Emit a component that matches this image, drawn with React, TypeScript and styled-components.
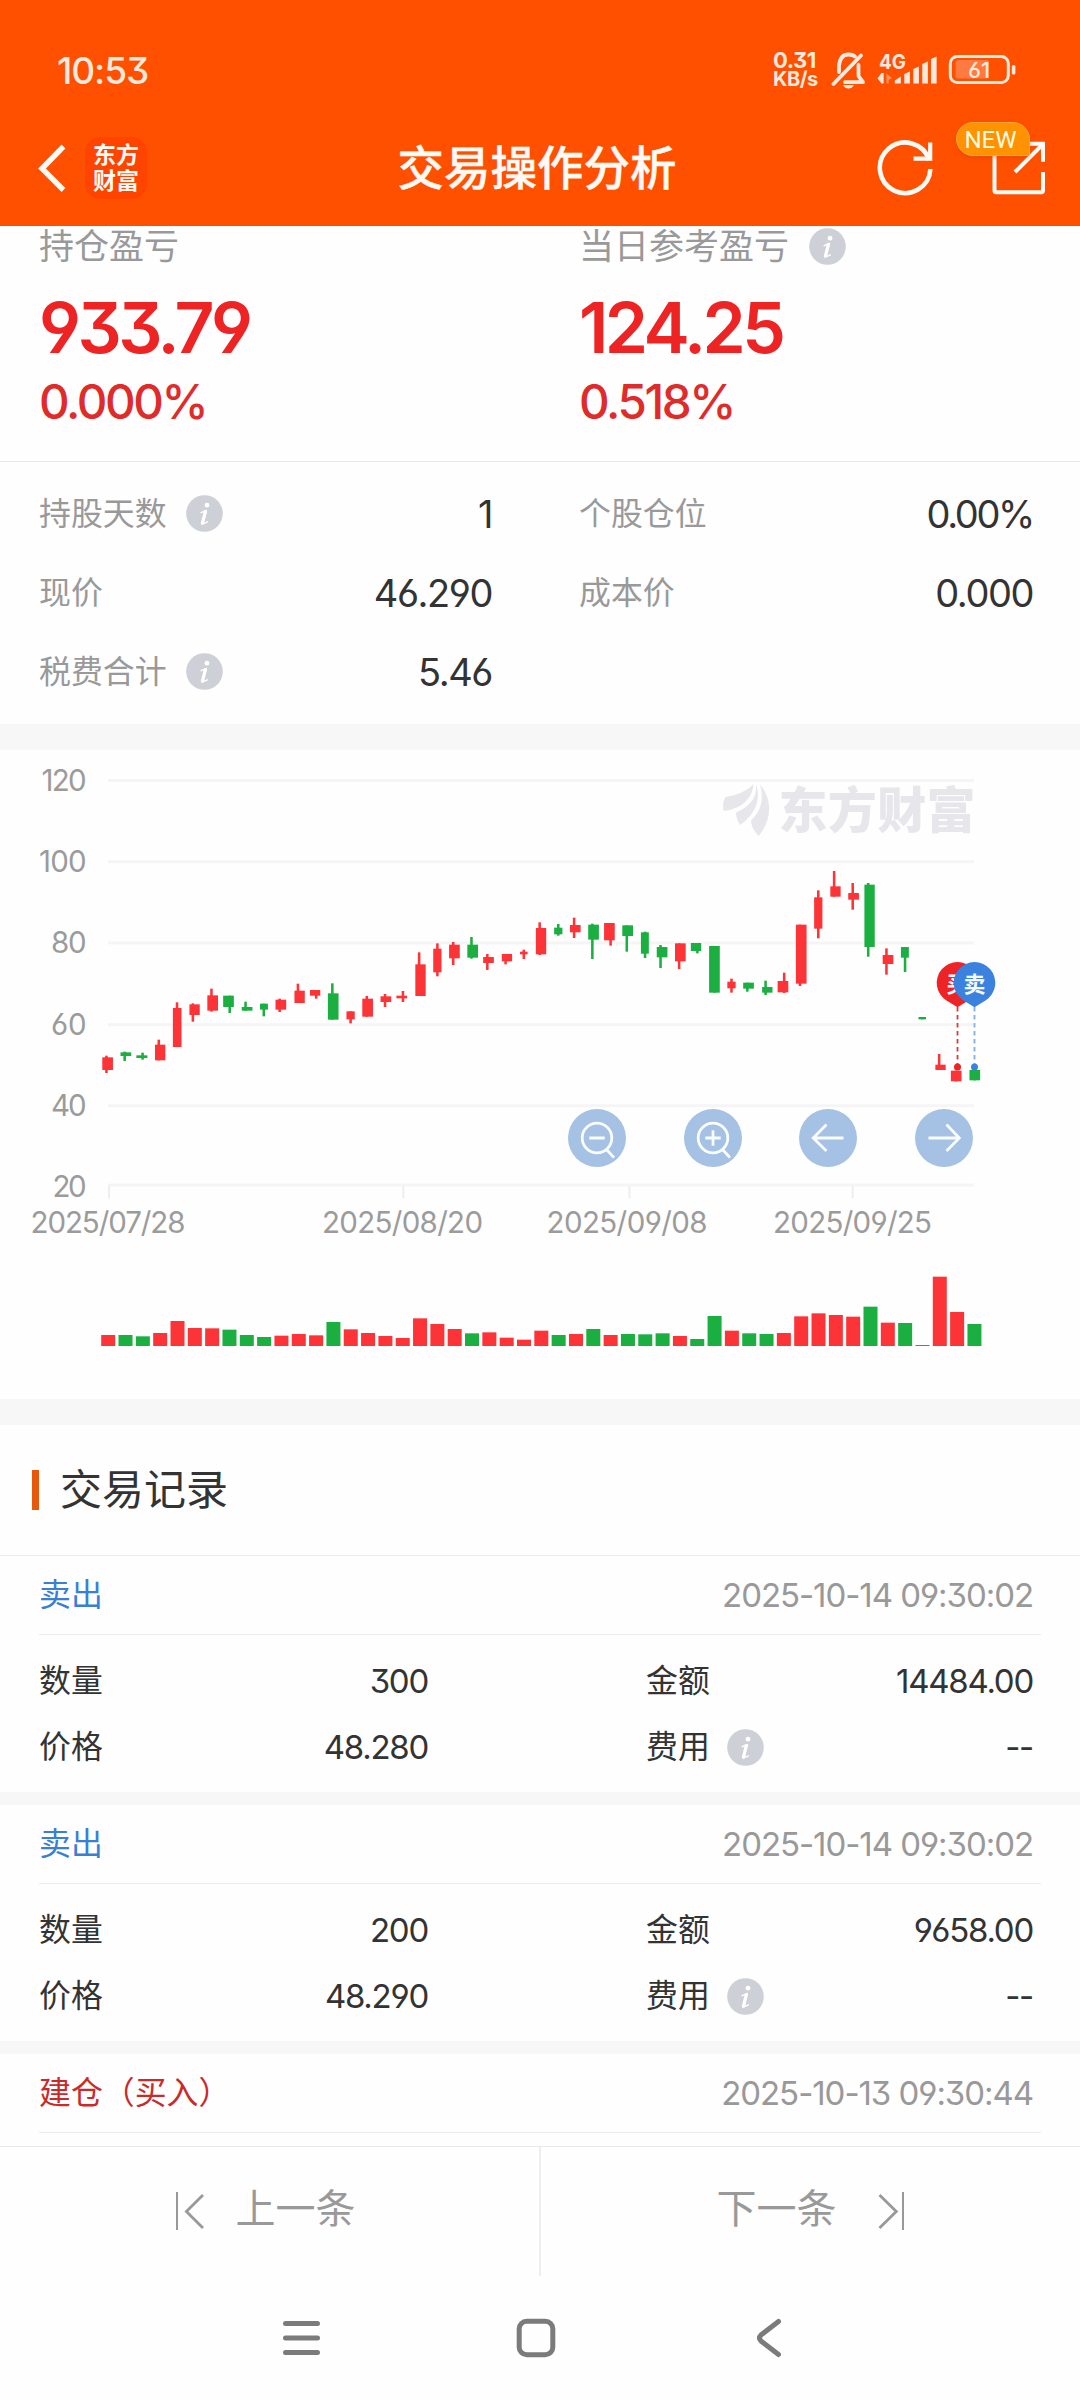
import React from 'react';
import styled, { createGlobalStyle } from 'styled-components';

const RED = '#fc3438';
const GREEN = '#1bae40';

const GlobalStyle = createGlobalStyle`
  * { box-sizing: border-box; }
  body {
    margin: 0;
    background: #fefefe;
    font-family: Inter, "Noto Sans CJK SC", sans-serif;
    font-feature-settings: "cv03", "cv04", "cv09";
    color: #333;
  }
  svg { display: block; flex: none; }
`;

const Page = styled.div`
  width: 1080px;
  height: 2400px;
  display: flex;
  flex-direction: column;
  overflow: hidden;
  background: #fefefe;
`;

/* ---------- header ---------- */

const Header = styled.header`
  height: 226px;
  flex: none;
  background: #ff5000;
  color: #fffaf5;
`;

const StatusBar = styled.div`
  height: 110px;
  padding: 30px 63px 0 57px;
  display: flex;
  align-items: center;
  color: #ffe9dd;
`;

const Clock = styled.span`
  flex: 1;
  font-size: 37px;
  font-weight: 500;
  letter-spacing: -0.03em;
`;

const NetSpeed = styled.div`
  width: 58px;
  display: flex;
  flex-direction: column;
  font-weight: 700;
  line-height: 19px;
  letter-spacing: -0.03em;
`;

const SpeedLine = styled.span<{ $size: number }>`
  font-size: ${(p) => p.$size}px;
`;

const TitleBar = styled.div`
  height: 116px;
  padding: 0 34px 0 38px;
  display: grid;
  grid-template-columns: 1fr auto 1fr;
  align-items: center;
`;

const TitleLeft = styled.div`
  display: flex;
  align-items: center;
  gap: 17px;
`;

const TitleRight = styled.div`
  display: flex;
  justify-content: flex-end;
  align-items: center;
  gap: 59px;
`;

const Title = styled.h1`
  margin: 0 10px 0 0;
  font-size: 46.5px;
  line-height: 60px;
  font-weight: 500;
  -webkit-text-stroke: 0.4px #fffaf5;
`;

const BrandTile = styled.div`
  width: 62px;
  height: 62px;
  border-radius: 15px;
  background: #ff4400;
  display: flex;
  flex-direction: column;
  align-items: center;
  justify-content: center;
  font-size: 23px;
  line-height: 26.5px;
  font-weight: 700;
`;

const ShareButton = styled.div`
  position: relative;
  width: 54px;
  height: 56px;
`;

const NewBadge = styled.span`
  position: absolute;
  left: -36px;
  top: -18px;
  width: 74px;
  height: 34px;
  border-radius: 17px 17px 2px 17px;
  border: 1px solid #ffa63c;
  background: #ff9200;
  box-shadow: 0 2px 4px rgba(200, 60, 0, 0.3);
  color: #fffbe0;
  font-family: Roboto, sans-serif;
  font-size: 24px;
  line-height: 34px;
  text-align: center;
  padding-right: 5px;
`;

/* ---------- content ---------- */

const Content = styled.main`
  flex: 1;
  min-height: 0;
  overflow: hidden;
`;

const Band = styled.div<{ $h: number }>`
  height: ${(p) => p.$h}px;
  background: #f7f7f7;
`;

const Summary = styled.section`
  height: 236px;
  display: grid;
  grid-template-columns: 1fr 1fr;
  border-bottom: 1px solid #e9e9e9;
`;

const SummaryCell = styled.div`
  padding-left: 39px;
  display: flex;
  flex-direction: column;
`;

const Label = styled.div<{ $size?: number; $dark?: boolean; $gap?: number }>`
  display: flex;
  align-items: center;
  gap: ${(p) => p.$gap ?? 19}px;
  font-size: ${(p) => p.$size ?? 31.9}px;
  line-height: 40px;
  color: ${(p) => (p.$dark ? '#333' : '#999')};
`;

const BigNumber = styled.div`
  margin-top: 22px;
  font-size: 69.5px;
  line-height: 80px;
  font-weight: 600;
  letter-spacing: -0.051em;
  color: #ee2424;
`;

const Percent = styled.div`
  margin-top: 9px;
  font-size: 47.5px;
  line-height: 50px;
  font-weight: 500;
  letter-spacing: -0.05em;
  color: #e02b2b;
`;

const Stats = styled.section`
  height: 262px;
  padding-top: 12px;
  display: grid;
  grid-template-columns: 540px 540px;
  grid-auto-rows: 79px;
`;

const Stat = styled.div<{ $right?: boolean }>`
  padding-left: 39px;
  padding-right: ${(p) => (p.$right ? 47 : 48)}px;
  display: flex;
  align-items: center;
  justify-content: space-between;
`;

const Value = styled.span<{ $size: number; $light?: boolean; $track?: number }>`
  font-size: ${(p) => p.$size}px;
  line-height: 44px;
  letter-spacing: ${(p) => p.$track ?? -0.038}em;
  color: ${(p) => (p.$light ? '#999' : '#333')};
`;

const ChartPanel = styled.section`
  position: relative;
  height: 649px;
`;

const AxisText = styled.text`
  font-size: 29.5px;
  font-weight: 400;
  fill: #9b9b9b;
`;

const ChartTools = styled.div`
  position: absolute;
  left: 568px;
  top: 358.5px;
  display: flex;
  gap: 57.7px;
`;

const ToolButton = styled.button`
  width: 58px;
  height: 58px;
  padding: 0;
  border: 0;
  border-radius: 50%;
  background: #a5c1e3;
`;

const SectionHead = styled.div`
  height: 131px;
  padding-left: 32px;
  display: flex;
  align-items: center;
  gap: 21px;
  border-bottom: 1px solid #ececec;
  font-size: 42px;
  line-height: 50px;
`;

const Accent = styled.i`
  width: 7px;
  height: 40px;
  background: #e6580c;
`;

const Record = styled.article`
  height: 236px;
`;

const RecordHead = styled.div`
  height: 79px;
  margin: 0 39px;
  padding: 0 8px 0 0;
  display: flex;
  align-items: center;
  justify-content: space-between;
  border-bottom: 1px solid #ebebeb;
`;

const Side = styled.span<{ $buy?: boolean }>`
  font-size: 31.9px;
  line-height: 40px;
  color: ${(p) => (p.$buy ? '#cb2a2a' : '#3a7fd4')};
`;

const RecordBody = styled.div`
  padding: 13px 47px 0 39px;
  display: grid;
  grid-template-columns: 389px 387px;
  column-gap: 218px;
  grid-auto-rows: 66px;
`;

const RecordCell = styled.div`
  display: flex;
  align-items: center;
  justify-content: space-between;
`;

/* ---------- footer ---------- */

const Pager = styled.footer`
  flex: none;
  height: 130px;
  display: grid;
  grid-template-columns: 1fr 1fr;
  border-top: 1px solid #e9e9e9;
`;

const PagerButton = styled.div<{ $gap: number; $first?: boolean }>`
  display: flex;
  align-items: center;
  justify-content: center;
  gap: ${(p) => p.$gap}px;
  padding-bottom: 2px;
  padding-right: ${(p) => (p.$first ? 8 : 1)}px;
  border-style: solid;
  border-color: #eeeeee;
  border-width: ${(p) => (p.$first ? '0 1px 0 0' : '0 0 0 1px')};
  font-size: 40px;
  color: #999;
`;

const PagerText = styled.span`
  line-height: 50px;
  padding-bottom: 4px;
`;

const SystemNav = styled.nav`
  flex: none;
  height: 124px;
  padding: 0 298px 0 282px;
  display: flex;
  align-items: center;
  justify-content: space-between;
`;

const HomeIcon = styled.svg`
  margin-right: 4px;
`;

/* ---------- icons ---------- */

const InfoIcon = () => (
  <svg width="37" height="37" viewBox="0 0 37 37">
    <circle cx="18.5" cy="18.5" r="18.3" fill="#cdd0d6" />
    <circle cx="21" cy="10.2" r="2.4" fill="#fff" />
    <path d="M15.2 17.6 Q18.3 16.2 20.3 15.6 L17.3 26.8 Q16.7 29.6 21.3 26.9" fill="none" stroke="#fff" strokeWidth="1.5" strokeLinejoin="round" strokeLinecap="round" />
    <path d="M19.3 16.6 L16.4 28.3" fill="none" stroke="#fff" strokeWidth="3.2" strokeLinecap="round" />
  </svg>
);

const StatusIcons = () => (
  <svg width="186" height="44" viewBox="831 48 186 44" fill="none">
    <g stroke="#ffe9dd" strokeWidth="3.8" strokeLinecap="round" strokeLinejoin="round">
      <path d="M833.5 84 L861 55.5" />
      <path d="M839 72 V66 Q840 54.5 848.5 54.5 Q852.5 54.5 855 56.5" />
      <path d="M845 82.2 H863 L858.5 76 V65" />
    </g>
    <path d="M843 85 H854 Q852 88.5 848.5 88.5 Q845 88.5 843 85 Z" fill="#ffe9dd" />
    <text x="879" y="68.5" fontSize="20" fontWeight="700" fill="#ffe9dd" textLength="27" lengthAdjust="spacingAndGlyphs">4G</text>
    <path d="M881.5 73 V83.5 L877.5 78.5 M881.5 73 H883.6 V83.5 H881.5 Z" fill="#ffe9dd" />
    <path d="M886.5 73.5 L892 78 L888.6 80 V83.5 H886.5 Z" fill="#ffe9dd" opacity=".45" />
    <g fill="#ffe9dd">
      <path d="M894.8 83.5 V80.5 L900.8 76.5 V83.5 Z" />
      <path d="M904.3 83.5 V74 L909.9 71.5 V83.5 Z" />
      <path d="M913.3 83.5 V69 L918.9 66.5 V83.5 Z" />
      <path d="M922.3 83.5 V64 L927.9 61.5 V83.5 Z" />
      <path d="M931 83.5 V59 L936.6 56.5 V83.5 Z" />
    </g>
    <rect x="950.3" y="56.5" width="58" height="26" rx="7" stroke="#ffe9dd" strokeWidth="3" />
    <rect x="955.6" y="60" width="33.5" height="18.5" rx="2.5" fill="#ff7a40" />
    <rect x="1011.8" y="65" width="3.6" height="9.5" rx="1.5" fill="#ffe9dd" />
    <text x="968" y="77.7" fontSize="22" fontWeight="500" fill="#ffe9dd" textLength="22" lengthAdjust="spacingAndGlyphs">61</text>
  </svg>
);

const BackIcon = () => (
  <svg width="30" height="48" viewBox="0 0 30 48" fill="none" stroke="#fffaf5" strokeWidth="5.4">
    <path d="M25.5 2.5 L4 24.5 L25.5 46" />
  </svg>
);

const RefreshIcon = () => (
  <svg width="56" height="58" viewBox="877 138 56 58" fill="none" stroke="#fffaf5" strokeWidth="4.6">
    <path d="M930.4 168 A25.3 25.3 0 1 1 929.2 159" />
    <path d="M930.2 141.5 V157.6 H913.5" strokeWidth="4.2" />
  </svg>
);

const ShareIcon = () => (
  <svg width="54" height="56" viewBox="992 140 54 56" fill="none" stroke="#fffaf5" strokeWidth="4">
    <path d="M994.5 150 V190.5 Q994.5 192.2 996.2 192.2 H1041.3 Q1043 192.2 1043 190.5 V172" />
    <path d="M1024 143.8 H1043 V161.8" />
    <path d="M1043 144 L1015 172" />
  </svg>
);

const ZoomIcon = ({ plus }: { plus?: boolean }) => (
  <svg width="58" height="58" viewBox="0 0 58 58" fill="none" stroke="#fafdff" strokeWidth="2.8">
    <circle cx="29" cy="29" r="14.8" />
    <path d="M21.3 29 H36.7 M39 41 L46 48.6" />
    {plus && <path d="M29 21.3 V36.7" />}
  </svg>
);

const ArrowIcon = ({ flip }: { flip?: boolean }) => (
  <svg width="58" height="58" viewBox="0 0 58 58" fill="none" stroke="#fafdff" strokeWidth="2.8">
    <path d={flip ? 'M13.5 29 H44 M31.5 15.5 L44.3 29 L31.5 42' : 'M44.5 29 H14 M27.5 15.5 L14.2 29 L27.5 42'} />
  </svg>
);

const FirstIcon = () => (
  <svg width="28" height="38" viewBox="0 0 28 38" fill="none" stroke="#999">
    <path d="M1 0 V38" strokeWidth="2" />
    <path d="M27 3 L10.4 19.5 L27 36" strokeWidth="2.8" />
  </svg>
);

const LastIcon = () => (
  <svg width="26" height="38" viewBox="0 0 26 38" fill="none" stroke="#999">
    <path d="M25 0 V38" strokeWidth="2" />
    <path d="M1.5 3 L18.3 19.5 L1.5 36" strokeWidth="2.8" />
  </svg>
);

/* ---------- chart ---------- */

// [left, right, wick, bodyTop, bodyBottom, high, low, up] on a fine candle grid
type Candle = [number, number, number, number, number, number, number, 0 | 1];

const candles: Candle[] = [
  [297, 328, 309, 952, 990, 947, 999, 1],
  [350, 381, 362, 937, 948, 935, 963, 0],
  [396, 428, 414, 946, 954, 938, 959, 0],
  [450, 480, 461, 914, 961, 899, 961, 1],
  [502, 527, 514, 804, 921, 787, 921, 1],
  [550, 580, 560, 793, 825, 790, 845, 1],
  [602, 633, 614, 766, 812, 746, 815, 1],
  [648, 679, 667, 767, 801, 767, 819, 0],
  [702, 733, 713, 801, 812, 785, 812, 0],
  [755, 778, 766, 791, 809, 791, 829, 0],
  [800, 831, 812, 779, 809, 776, 816, 1],
  [855, 885, 865, 752, 789, 731, 789, 1],
  [900, 930, 918, 750, 767, 750, 776, 1],
  [952, 983, 965, 760, 839, 730, 839, 0],
  [1006, 1030, 1018, 814, 838, 814, 850, 1],
  [1052, 1083, 1065, 776, 830, 768, 830, 1],
  [1105, 1136, 1118, 769, 786, 762, 801, 1],
  [1151, 1182, 1170, 767, 775, 753, 786, 1],
  [1206, 1236, 1217, 673, 768, 637, 768, 1],
  [1258, 1282, 1270, 626, 697, 610, 709, 1],
  [1304, 1335, 1316, 614, 655, 606, 675, 1],
  [1357, 1388, 1369, 614, 653, 591, 656, 0],
  [1403, 1434, 1415, 651, 669, 642, 690, 1],
  [1457, 1487, 1468, 642, 664, 642, 673, 1],
  [1510, 1532, 1521, 635, 643, 629, 657, 1],
  [1556, 1586, 1567, 564, 643, 547, 645, 1],
  [1609, 1633, 1621, 563, 583, 552, 587, 0],
  [1655, 1686, 1667, 555, 577, 533, 594, 1],
  [1708, 1739, 1720, 554, 599, 551, 657, 0],
  [1754, 1785, 1773, 549, 601, 549, 617, 1],
  [1807, 1838, 1820, 556, 588, 556, 635, 0],
  [1861, 1884, 1873, 577, 641, 575, 654, 0],
  [1907, 1938, 1918, 621, 652, 615, 684, 0],
  [1960, 1991, 1972, 610, 664, 610, 687, 1],
  [2006, 2036, 2025, 609, 633, 609, 640, 0],
  [2059, 2090, 2075, 618, 758, 618, 758, 0],
  [2112, 2136, 2124, 725, 745, 716, 758, 1],
  [2158, 2189, 2170, 728, 746, 728, 755, 0],
  [2213, 2243, 2223, 741, 758, 722, 765, 0],
  [2258, 2289, 2277, 723, 757, 698, 759, 1],
  [2311, 2342, 2323, 554, 731, 554, 738, 1],
  [2364, 2388, 2376, 472, 566, 451, 595, 1],
  [2411, 2441, 2422, 439, 470, 393, 470, 1],
  [2463, 2494, 2476, 459, 479, 429, 509, 1],
  [2510, 2540, 2521, 434, 621, 429, 650, 0],
  [2563, 2594, 2574, 645, 672, 625, 704, 1],
  [2616, 2639, 2628, 621, 653, 621, 696, 0],
  [2667, 2689, 2678, 831, 838, 831, 838, 0],
  [2716, 2746, 2727, 974, 990, 942, 990, 1],
  [2761, 2792, 2776, 992, 1024, 992, 1024, 1],
  [2815, 2846, 2830, 990, 1021, 990, 1021, 0],
];

const volumes = [
  33, 33, 29, 39, 75, 54, 53, 49, 33, 27, 31, 36, 32, 72, 50, 39, 30, 24, 83, 66, 51, 38, 41, 25, 19, 46,
  33, 36, 51, 33, 36, 35, 38, 30, 21, 90, 46, 38, 36, 39, 89, 98, 93, 88, 118, 70, 69, 3, 208, 102, 66,
];

const gridLines = [
  { y: 30.5, label: '120', labelX: 41.5, w: 45 },
  { y: 111.7, label: '100', labelX: 39, w: 47.5 },
  { y: 193, label: '80', labelX: 51, w: 35.7 },
  { y: 274.7, label: '60', labelX: 51, w: 35.7 },
  { y: 355.8, label: '40', labelX: 51, w: 35.7 },
  { y: 435, label: '20', labelX: 52.5, w: 34.2 },
];

const dates = [
  { tick: 109, x: 30.5, w: 155, text: '2025/07/28' },
  { tick: 403.3, x: 322, w: 161, text: '2025/08/20' },
  { tick: 629.5, x: 546.5, w: 161, text: '2025/09/08' },
  { tick: 852.7, x: 773, w: 159, text: '2025/09/25' },
];

const Pin = ({ x, color, line, text }: { x: number; color: string; line: string; text: string }) => (
  <g>
    <path d={`M${x} 257 V314`} stroke={line} strokeWidth="1.8" strokeDasharray="4.4 3.6" />
    <circle cx={x} cy="317" r="3.5" fill={color} />
    <path d={`M${x} 257.3 L${x - 11} 250.5 A20.8 20.8 0 1 1 ${x + 11} 250.5 Z`} fill={color} />
    <text x={x} y="241.8" fontSize="22" fontWeight="700" textAnchor="middle" fill="#f4f9ff">{text}</text>
  </g>
);

const Chart = () => (
  <svg width="1080" height="649" viewBox="0 0 1080 649">
    {gridLines.map((g, i) => (
      <g key={g.label}>
        <path d={`M108 ${g.y} H974`} stroke="#f5f5f5" strokeWidth="3" />
        <AxisText x={g.labelX} y={41 + i * 81.2} textLength={g.w}>{g.label}</AxisText>
      </g>
    ))}
    {dates.map((d) => (
      <g key={d.text}>
        <path d={`M${d.tick} 436 V448.5`} stroke="#eeeeee" strokeWidth="2" />
        <AxisText x={d.x} y="483" textLength={d.w}>{d.text}</AxisText>
      </g>
    ))}

    <g fill="#e6e6eb">
      <path d="M753.5 34 C747 42 733 46 725.5 47 Q721.5 54 724 61 C739 59 752 51 753.5 34 Z" />
      <path d="M756 34 C757.5 48 749 57 736 62.5 Q736 69 740 75 C753 66 762 52 756 34 Z" />
      <path d="M760 34.5 C765 52 759 63 751 70.5 Q751 78 758.5 86 C770 73 774.5 52 760 34.5 Z" />
      <text x="778.5" y="77.5" fontSize="49" fontWeight="900" textLength="197">东方财富</text>
    </g>

    <g transform="translate(0 -10) scale(0.34439 0.33333)">
      {candles.map(([l, r, w, top, bottom, high, low, up]) => (
        <g key={l} fill={up ? RED : GREEN}>
          <rect x={w - 3.7} y={high} width="7.4" height={low - high} />
          <rect x={l} y={top} width={r - l} height={bottom - top} />
        </g>
      ))}
    </g>

    {volumes.map((v, i) => (
      <rect key={i} x={101.2 + i * 17.325} y={596 - v / 3} width="14" height={v / 3} fill={candles[i][7] ? RED : GREEN} />
    ))}

    <Pin x={957.5} color="#ee2326" line="#d04040" text="买" />
    <Pin x={974.5} color="#3b82de" line="#7fb0e6" text="卖" />
  </svg>
);

/* ---------- data ---------- */

const stats = [
  { label: '持股天数', info: true, value: '1' },
  { label: '个股仓位', value: '0.00%', track: -0.062 },
  { label: '现价', value: '46.290' },
  { label: '成本价', value: '0.000' },
  { label: '税费合计', info: true, value: '5.46' },
];

const records = [
  { side: '卖出', time: '2025-10-14 09:30:02', qty: '300', amount: '14484.00', price: '48.280' },
  { side: '卖出', time: '2025-10-14 09:30:02', qty: '200', amount: '9658.00', price: '48.290' },
];

export default function App() {
  return (
    <Page>
      <GlobalStyle />
      <Header>
        <StatusBar>
          <Clock>10:53</Clock>
          <NetSpeed>
            <SpeedLine $size={22}>0.31</SpeedLine>
            <SpeedLine $size={20}>KB/s</SpeedLine>
          </NetSpeed>
          <StatusIcons />
        </StatusBar>
        <TitleBar>
          <TitleLeft>
            <BackIcon />
            <BrandTile>
              <span>东方</span>
              <span>财富</span>
            </BrandTile>
          </TitleLeft>
          <Title>交易操作分析</Title>
          <TitleRight>
            <RefreshIcon />
            <ShareButton>
              <ShareIcon />
              <NewBadge>NEW</NewBadge>
            </ShareButton>
          </TitleRight>
        </TitleBar>
      </Header>

      <Content>
        <Summary>
          <SummaryCell>
            <Label $size={35}>持仓盈亏</Label>
            <BigNumber>933.79</BigNumber>
            <Percent>0.000%</Percent>
          </SummaryCell>
          <SummaryCell>
            <Label $size={35} $gap={20}>当日参考盈亏<InfoIcon /></Label>
            <BigNumber>124.25</BigNumber>
            <Percent>0.518%</Percent>
          </SummaryCell>
        </Summary>

        <Stats>
          {stats.map((s, i) => (
            <Stat key={s.label} $right={i % 2 === 1}>
              <Label>{s.label}{s.info && <InfoIcon />}</Label>
              <Value $size={38} $track={s.track}>{s.value}</Value>
            </Stat>
          ))}
        </Stats>
        <Band $h={26} />

        <ChartPanel>
          <Chart />
          <ChartTools>
            <ToolButton><ZoomIcon /></ToolButton>
            <ToolButton><ZoomIcon plus /></ToolButton>
            <ToolButton><ArrowIcon /></ToolButton>
            <ToolButton><ArrowIcon flip /></ToolButton>
          </ChartTools>
        </ChartPanel>
        <Band $h={26} />

        <SectionHead><Accent />交易记录</SectionHead>

        {records.map((r) => (
          <React.Fragment key={r.qty}>
            <Record>
              <RecordHead>
                <Side>{r.side}</Side>
                <Value $size={33} $light $track={-0.032}>{r.time}</Value>
              </RecordHead>
              <RecordBody>
                <RecordCell><Label $dark>数量</Label><Value $size={33}>{r.qty}</Value></RecordCell>
                <RecordCell><Label $dark>金额</Label><Value $size={33}>{r.amount}</Value></RecordCell>
                <RecordCell><Label $dark>价格</Label><Value $size={33}>{r.price}</Value></RecordCell>
                <RecordCell><Label $dark $gap={17.5}>费用<InfoIcon /></Label><Value $size={33}>--</Value></RecordCell>
              </RecordBody>
            </Record>
            <Band $h={13} />
          </React.Fragment>
        ))}
        <RecordHead>
          <Side $buy>建仓（买入）</Side>
          <Value $size={33} $light $track={-0.032}>2025-10-13 09:30:44</Value>
        </RecordHead>
      </Content>

      <Pager>
        <PagerButton $gap={32} $first><FirstIcon /><PagerText>上一条</PagerText></PagerButton>
        <PagerButton $gap={41}><PagerText>下一条</PagerText><LastIcon /></PagerButton>
      </Pager>

      <SystemNav>
        <svg width="38" height="40" viewBox="0 0 38 40" stroke="#7b7b7b" strokeWidth="5" strokeLinecap="round">
          <path d="M3.5 5.4 H35.5 M3.5 20 H35.5 M3.5 34.6 H35.5" />
        </svg>
        <HomeIcon width="40" height="40" viewBox="0 0 40 40" fill="none" stroke="#7b7b7b" strokeWidth="5">
          <rect x="3.2" y="3.2" width="33.6" height="33.6" rx="7.5" />
        </HomeIcon>
        <svg width="26" height="40" viewBox="0 0 26 40" fill="none" stroke="#7b7b7b" strokeWidth="5" strokeLinecap="round">
          <path d="M22.5 3.5 L5 17 Q2 20 5 23 L22.5 36.5" />
        </svg>
      </SystemNav>
    </Page>
  );
}
